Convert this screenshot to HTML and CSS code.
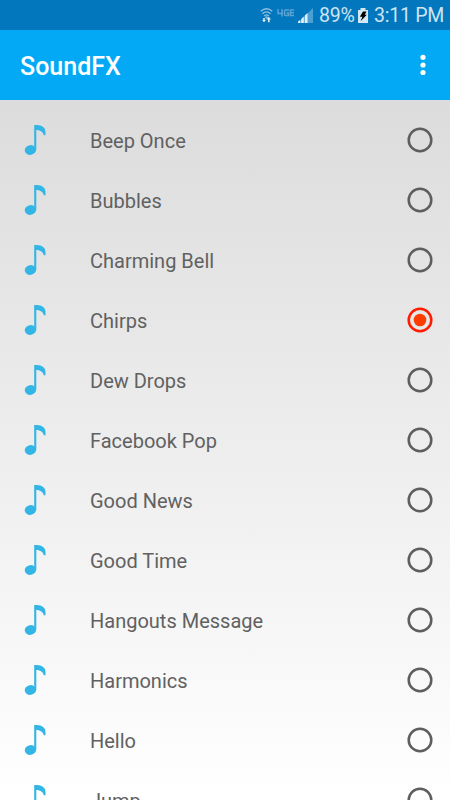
FILE: index.html
```
<!DOCTYPE html>
<html lang="en">
<head>
<meta charset="utf-8">
<title>SoundFX</title>
<link rel="stylesheet" href="styles.css">
</head>
<body>
<svg class="defs" aria-hidden="true">
  <symbol id="note" viewBox="0 0 22 30" overflow="visible">
    <ellipse cx="5.400" cy="25" rx="5.700" ry="4.900" transform="rotate(-8 5.400 25)"/>
    <path d="M9.200 0H12C17 .3 20.500 2.500 20.500 7V10.300H18.800C18 6.500 14.500 5 11.300 5V25H9.200Z"/>
  </symbol>
  <symbol id="off" viewBox="0 0 26 26">
    <circle cx="13" cy="13" r="11.300" fill="none" stroke="#5e5e5e" stroke-width="2.500"/>
  </symbol>
  <symbol id="on" viewBox="0 0 26 26">
    <circle cx="13" cy="13" r="11.300" fill="none" stroke="#ff1c00" stroke-width="2.500"/>
    <circle cx="13" cy="13" r="6.300" fill="#ff3d00"/>
  </symbol>
</svg>
<div class="status">
  <svg class="wifi" width="14" height="18" viewBox="0 0 14 18">
    <g fill="none" stroke="#8dc0e2" stroke-width="1.300">
      <path d="M.7 4.200Q6.500-.8 12.300 4.200M2.400 6.700Q6.500 3.100 10.600 6.700M4.200 8.900Q6.500 6.900 8.800 8.900"/>
    </g>
    <circle cx="6.500" cy="10.500" r="1.200" fill="#8dc0e2"/>
    <path d="M3.200 11H4.800V13H6L4 15.300 2 13H3.200ZM8 15.300V12.500H6.500L8.800 9.800 11 12.500H9.600V15.300Z" fill="#d8ebf7"/>
  </svg>
  <svg class="lte" width="18" height="9" viewBox="0 0 18 9">
    <path d="M1 0V4.500H6M5 0V7.500M12 1H8.500Q7.500 1 7.500 2V5.500Q7.500 6.500 8.500 6.500H11.500V4H9.500M17 1H13.500V6.500H17M13.500 3.700H17" fill="none" stroke="#5ba3d3" stroke-width="1.500"/>
  </svg>
  <svg class="signal" width="16" height="16" viewBox="0 0 16 16">
    <path d="M0 16L15 1V16Z" fill="#4c9fd3"/>
    <path d="M0 16V14.500L2.200 13V16ZM3.200 16V12L5.800 9.500V16ZM6.800 16V8.500L9.500 6V16Z" fill="#e1f0f9"/>
  </svg>
  <span class="percent">89%</span>
  <svg class="battery" width="10" height="15" viewBox="0 0 10 15">
    <path d="M0 2H2.500V0H7.500V2H10V15H0Z" fill="#d3e7f4"/>
    <path d="M5 3.500H8.500L6.800 6.800H8.800L2.600 13.300 4.400 8.700H1.800Z" fill="#000"/>
  </svg>
  <span class="time">3:11 PM</span>
</div>
<header class="toolbar">
  <h1>SoundFX</h1>
  <svg width="6" height="22" viewBox="0 0 6 22" fill="#fff"><circle cx="3" cy="3.300" r="2.600"/><circle cx="3" cy="11" r="2.600"/><circle cx="3" cy="18.500" r="2.600"/></svg>
</header>
<main class="list">
  <label class="row"><svg class="note"><use href="#note"/></svg><span>Beep Once</span><svg class="radio"><use href="#off"/></svg></label>
  <label class="row"><svg class="note"><use href="#note"/></svg><span>Bubbles</span><svg class="radio"><use href="#off"/></svg></label>
  <label class="row"><svg class="note"><use href="#note"/></svg><span>Charming Bell</span><svg class="radio"><use href="#off"/></svg></label>
  <label class="row"><svg class="note"><use href="#note"/></svg><span>Chirps</span><svg class="radio"><use href="#on"/></svg></label>
  <label class="row"><svg class="note"><use href="#note"/></svg><span>Dew Drops</span><svg class="radio"><use href="#off"/></svg></label>
  <label class="row"><svg class="note"><use href="#note"/></svg><span>Facebook Pop</span><svg class="radio"><use href="#off"/></svg></label>
  <label class="row"><svg class="note"><use href="#note"/></svg><span>Good News</span><svg class="radio"><use href="#off"/></svg></label>
  <label class="row"><svg class="note"><use href="#note"/></svg><span>Good Time</span><svg class="radio"><use href="#off"/></svg></label>
  <label class="row"><svg class="note"><use href="#note"/></svg><span>Hangouts Message</span><svg class="radio"><use href="#off"/></svg></label>
  <label class="row"><svg class="note"><use href="#note"/></svg><span>Harmonics</span><svg class="radio"><use href="#off"/></svg></label>
  <label class="row"><svg class="note"><use href="#note"/></svg><span>Hello</span><svg class="radio"><use href="#off"/></svg></label>
  <label class="row"><svg class="note"><use href="#note"/></svg><span>Jump</span><svg class="radio"><use href="#off"/></svg></label>
</main>
</body>
</html>
```
FILE: styles.css
```
* { box-sizing: border-box; }
body {
  margin: 0;
  height: 800px;
  overflow: hidden;
  display: flex;
  flex-direction: column;
  font-family: Roboto, "Liberation Sans", sans-serif;
}
.defs { display: none; }
.status {
  flex: none;
  height: 30px;
  padding-right: 7px;
  display: flex;
  align-items: center;
  justify-content: flex-end;
  background: #0277bd;
  color: #cde4f3;
  font-size: 19.5px;
  letter-spacing: -0.25px;
  line-height: 30px;
  white-space: nowrap;
}
.status span { padding-top: 1px; }
.wifi { margin: 1px 3px 0 0; }
.lte { margin: 0 3px 4px 0; }
.signal { margin-right: 5px; }
.percent { width: 35px; }
.battery { margin: 0 6px 0 4px; }
.time { width: 69px; }
.toolbar {
  flex: none;
  height: 70px;
  padding: 0 24px 0 20px;
  display: flex;
  align-items: center;
  justify-content: space-between;
  background: #03a9f4;
}
.toolbar h1 {
  margin: 3px 0 0;
  color: #fff;
  font-size: 25px;
  font-weight: 500;
  line-height: 30px;
}
.list {
  flex: 1;
  min-height: 0;
  overflow: hidden;
  padding-top: 10px;
  background: linear-gradient(#dcdcdc, #fff);
}
.row {
  height: 60px;
  padding: 0 17px 0 25px;
  display: flex;
  align-items: center;
  color: #616161;
  font-size: 20px;
}
.row span {
  flex: 1;
  margin: 2px 0 0 43px;
}
.note {
  width: 22px;
  height: 30px;
  fill: #33b5e5;
  overflow: visible;
}
.radio {
  width: 26px;
  height: 26px;
}
```
